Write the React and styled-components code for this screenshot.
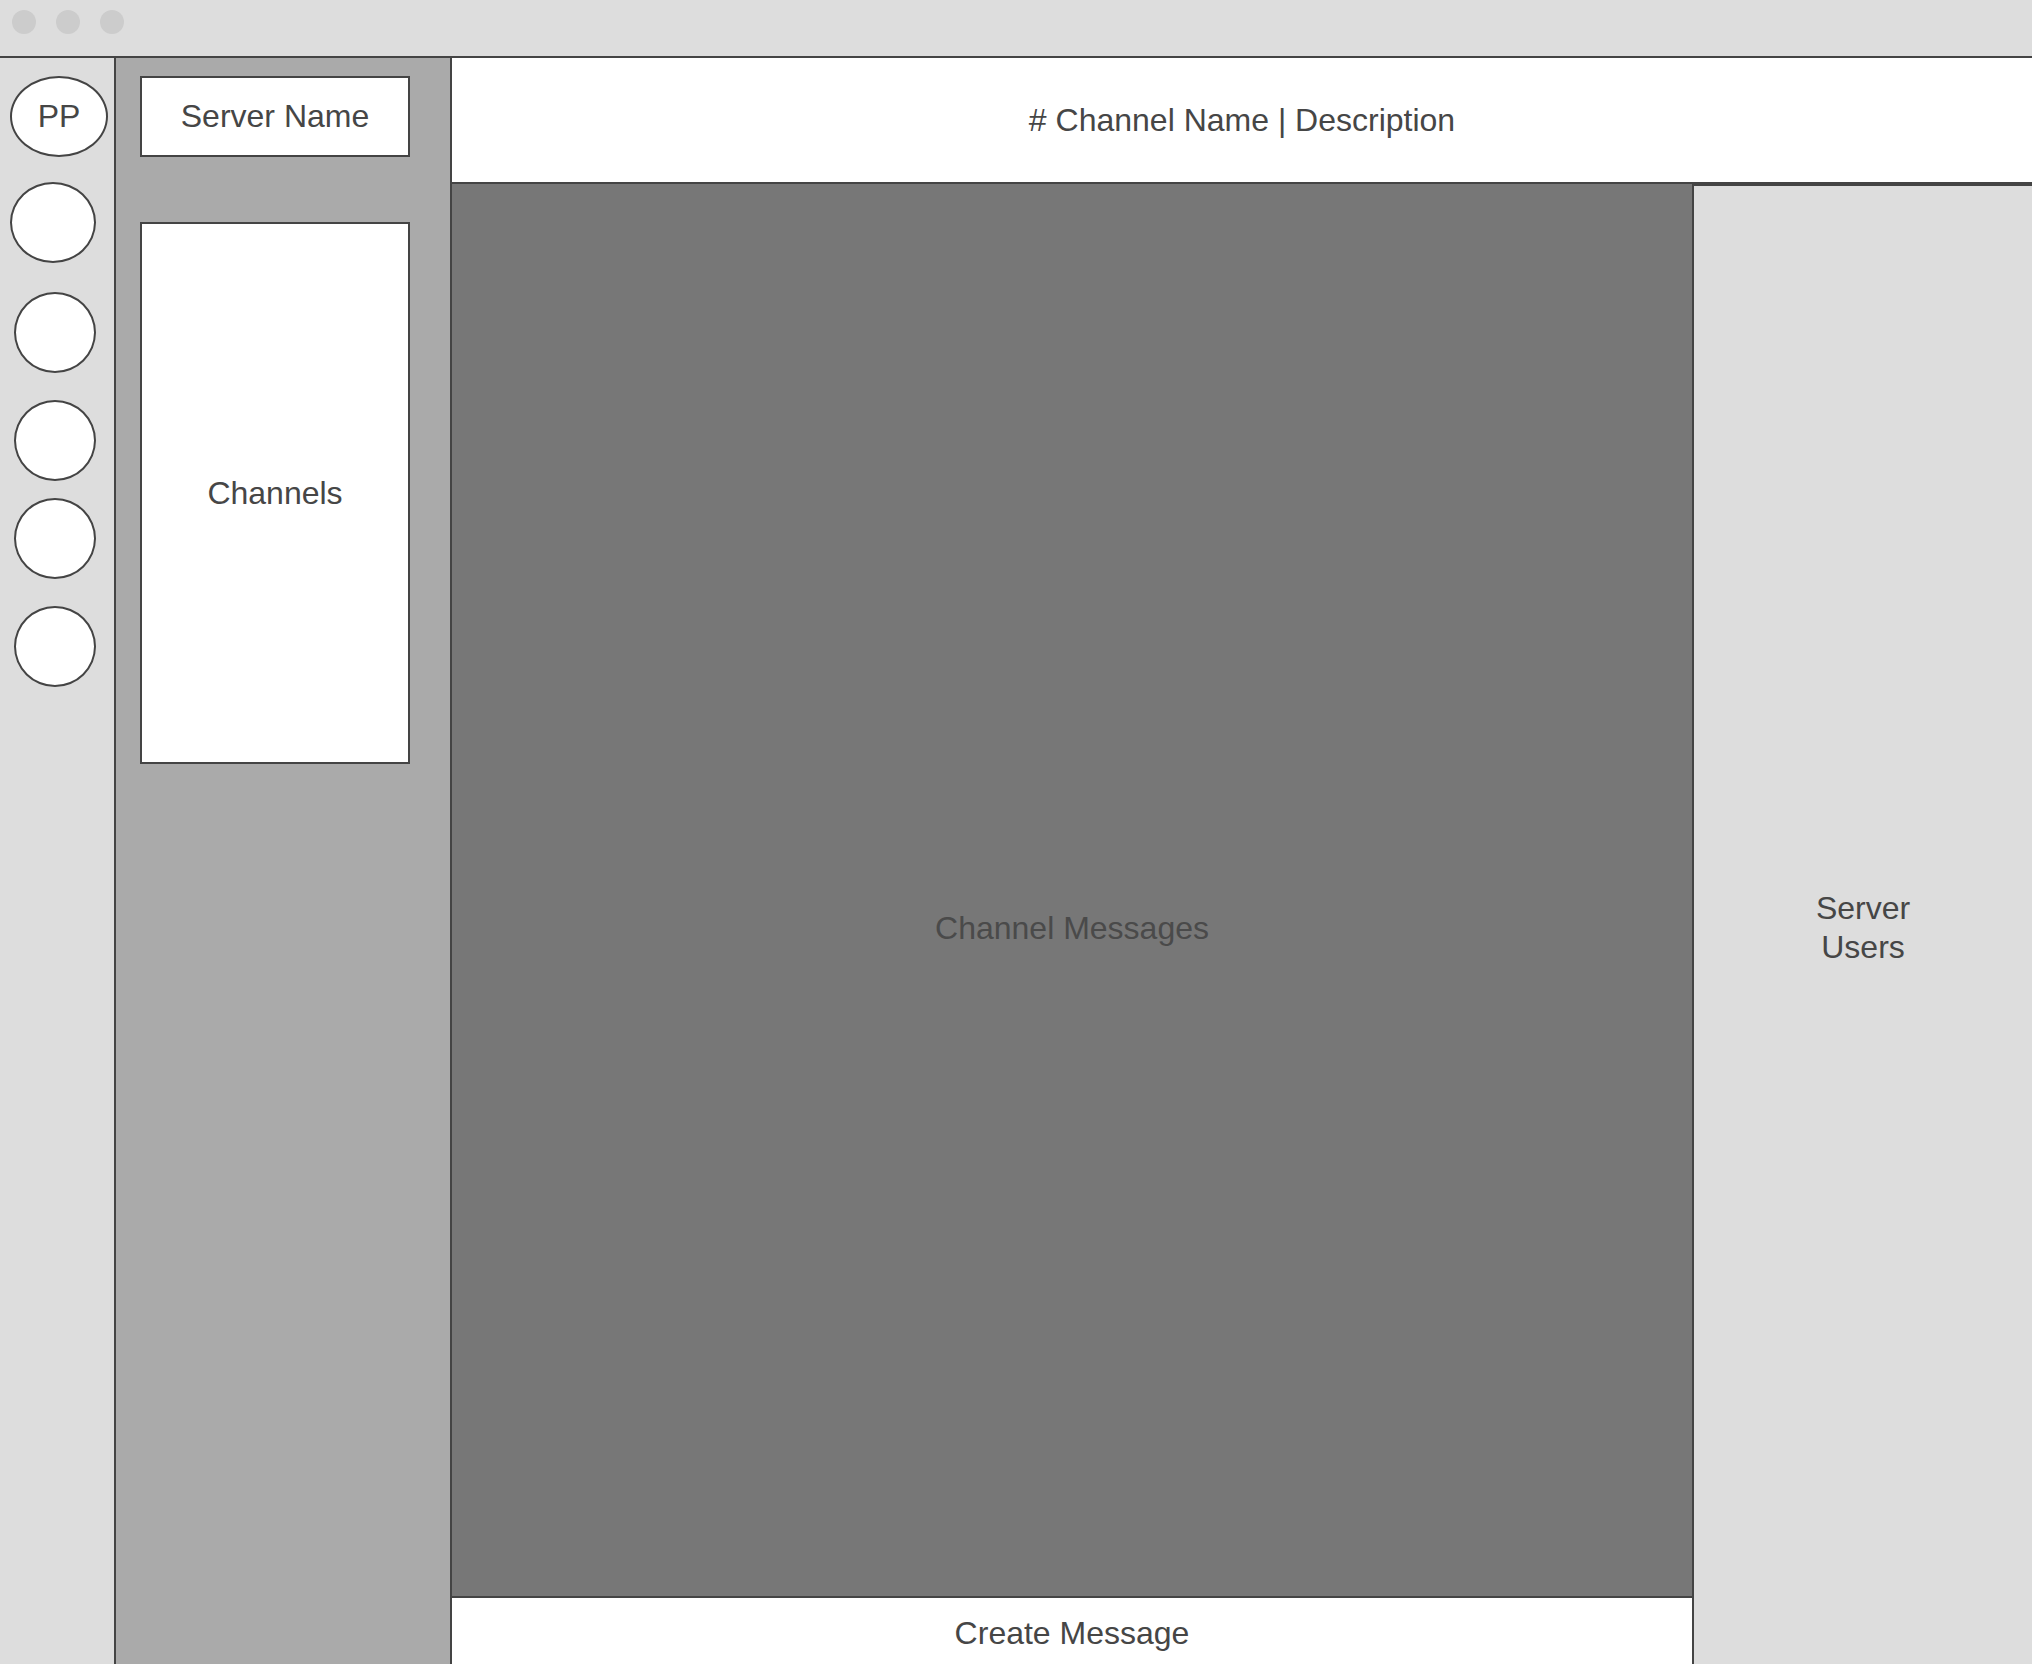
import React from 'react';
import styled, { createGlobalStyle } from 'styled-components';

const GlobalStyle = createGlobalStyle`
  html, body {
    margin: 0;
    padding: 0;
  }
  body {
    font-family: "Liberation Sans", Arial, sans-serif;
    color: #464646;
  }
  * {
    box-sizing: border-box;
  }
`;

const servers = [
  { label: 'PP', w: 98, h: 81, left: 10, top: 18 },
  { label: '', w: 86, h: 81, left: 10, top: 25 },
  { label: '', w: 82, h: 81, left: 14, top: 29 },
  { label: '', w: 82, h: 81, left: 14, top: 27 },
  { label: '', w: 82, h: 81, left: 14, top: 17 },
  { label: '', w: 82, h: 81, left: 14, top: 27 },
];

export default function App() {
  return (
    <>
      <GlobalStyle />
      <Window>
        <TitleBar>
          <Dot />
          <Dot />
          <Dot />
        </TitleBar>
        <Body>
          <ServerRail>
            {servers.map((s, i) => (
              <ServerIcon key={i} $w={s.w} $h={s.h} $left={s.left} $top={s.top}>
                {s.label}
              </ServerIcon>
            ))}
          </ServerRail>
          <ChannelSidebar>
            <ServerName>Server Name</ServerName>
            <ChannelList>Channels</ChannelList>
          </ChannelSidebar>
          <Main>
            <ChannelHeader># Channel Name | Description</ChannelHeader>
            <ContentRow>
              <MessageColumn>
                <Messages>Channel Messages</Messages>
                <Composer>Create Message</Composer>
              </MessageColumn>
              <UsersPanel>
                Server
                <br />
                Users
              </UsersPanel>
            </ContentRow>
          </Main>
        </Body>
      </Window>
    </>
  );
}

const Window = styled.div`
  display: flex;
  flex-direction: column;
  height: 1664px;
  overflow: hidden;
`;

const TitleBar = styled.div`
  height: 58px;
  flex-shrink: 0;
  display: flex;
  align-items: flex-start;
  gap: 20px;
  padding: 10px 0 0 12px;
  background: #dddddd;
  border-bottom: 2px solid #444444;
`;

const Dot = styled.span`
  width: 24px;
  height: 24px;
  border-radius: 50%;
  background: #cccccc;
`;

const Body = styled.div`
  flex: 1;
  display: flex;
  min-height: 0;
`;

const ServerRail = styled.nav`
  width: 116px;
  flex-shrink: 0;
  display: flex;
  flex-direction: column;
  align-items: flex-start;
  background: #dddddd;
  border-right: 2px solid #444444;
`;

const ServerIcon = styled.div`
  width: ${p => p.$w}px;
  height: ${p => p.$h}px;
  margin: ${p => p.$top}px 0 0 ${p => p.$left}px;
  border: 2px solid #444444;
  border-radius: 50%;
  background: #ffffff;
  display: flex;
  align-items: center;
  justify-content: center;
  font-size: 32px;
`;

const ChannelSidebar = styled.aside`
  width: 336px;
  flex-shrink: 0;
  display: flex;
  flex-direction: column;
  gap: 65px;
  padding: 18px 0 0 24px;
  background: #aaaaaa;
  border-right: 2px solid #444444;
`;

const Box = styled.div`
  width: 270px;
  display: flex;
  align-items: center;
  justify-content: center;
  background: #ffffff;
  border: 2px solid #444444;
  font-size: 32px;
`;

const ServerName = styled(Box)`
  height: 81px;
`;

const ChannelList = styled(Box)`
  height: 542px;
`;

const Main = styled.main`
  flex: 1;
  display: flex;
  flex-direction: column;
  min-width: 0;
`;

const ChannelHeader = styled.header`
  height: 126px;
  flex-shrink: 0;
  display: flex;
  align-items: center;
  justify-content: center;
  background: #ffffff;
  border-bottom: 2px solid #444444;
  font-size: 32px;
`;

const ContentRow = styled.div`
  flex: 1;
  display: flex;
  min-height: 0;
`;

const MessageColumn = styled.section`
  width: 1242px;
  flex-shrink: 0;
  display: flex;
  flex-direction: column;
  border-right: 2px solid #444444;
`;

const Messages = styled.div`
  flex: 1;
  display: flex;
  align-items: center;
  justify-content: center;
  background: #777777;
  color: #4a4a4a;
  font-size: 32px;
  padding-top: 76px;
`;

const Composer = styled.div`
  height: 68px;
  flex-shrink: 0;
  display: flex;
  align-items: center;
  justify-content: center;
  background: #ffffff;
  border-top: 2px solid #444444;
  font-size: 32px;
  padding-top: 4px;
`;

const UsersPanel = styled.aside`
  flex: 1;
  display: flex;
  align-items: center;
  justify-content: center;
  text-align: center;
  background: #dddddd;
  border-top: 2px solid #444444;
  font-size: 32px;
  line-height: 39px;
  padding-top: 6px;
`;
